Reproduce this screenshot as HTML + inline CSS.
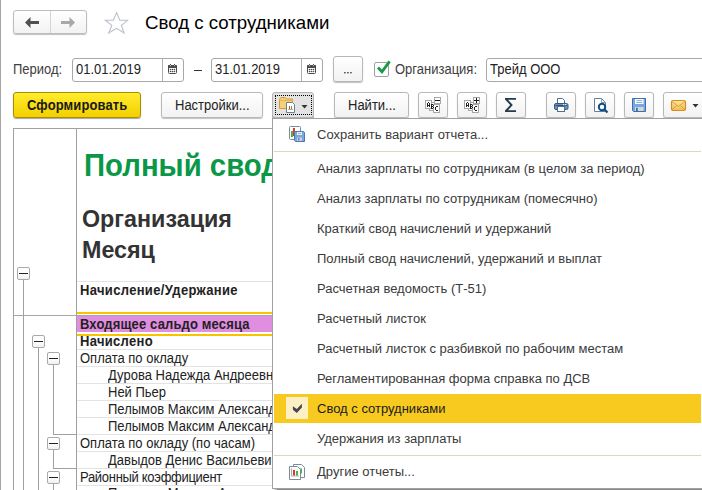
<!DOCTYPE html>
<html><head><meta charset="utf-8">
<style>
*{box-sizing:border-box}
html,body{margin:0;padding:0;width:702px;height:490px;overflow:hidden;background:#fff;position:relative;font-family:"Liberation Sans",sans-serif;color:#333}
.a{position:absolute}
.t{position:absolute;white-space:nowrap;line-height:1;font-size:13px;color:#222;transform:scaleY(1.06);transform-origin:0 11px}
.btn{position:absolute;height:26px;border:1px solid #b8b8b8;border-radius:3px;background:linear-gradient(#fff,#f2f2f2);box-shadow:0 1px 1px rgba(0,0,0,.25)}
.inp{position:absolute;height:24px;border:1px solid #a8a8a8;border-radius:3px;background:#fff}
.hl{position:absolute;height:1px;background:#e3e3e3}
.vl{position:absolute;width:1px;background:#a0a0a0}
.box{position:absolute;width:13px;height:13px;border:1px solid #a9a9a9;border-radius:2px;background:linear-gradient(#fff 50%,#f0f0f0)}
.box:after{content:"";position:absolute;left:1px;top:5px;width:9px;height:1px;background:#222}
.mi{position:absolute;left:317px;white-space:nowrap;line-height:1;font-size:13px;color:#3a3a3a;transform:scaleY(1.04);transform-origin:0 11px}
</style></head>
<body>
<!-- left window border -->
<div class="a" style="left:0;top:0;width:1px;height:490px;background:#a6a6a6"></div>

<!-- nav buttons -->
<div class="btn" style="left:13px;top:10px;width:74px;height:24px;border-color:#bdbdbd"></div>
<div class="a" style="left:50px;top:11px;width:1px;height:22px;background:#d4d4d4"></div>
<svg class="a" style="left:25px;top:17px" width="15" height="11" viewBox="0 0 15 11"><path d="M0 5.5 L5.5 0 L5.5 4 L14 4 L14 7 L5.5 7 L5.5 11 Z" fill="#505050"/></svg>
<svg class="a" style="left:60px;top:17px" width="15" height="11" viewBox="0 0 15 11"><path d="M15 5.5 L9.5 0 L9.5 4 L1 4 L1 7 L9.5 7 L9.5 11 Z" fill="#a8a8a8"/></svg>
<!-- star -->
<svg class="a" style="left:104px;top:11px" width="25" height="24" viewBox="0 0 25 24"><path d="M12.6 1.6 L15.8 9.3 L23.6 9.3 L17.4 14.4 L20 22 L12.6 17.3 L4.8 22 L7.8 14.4 L1.2 9.3 L9.3 9.3 Z" fill="none" stroke="#b9c0c8" stroke-width="1.1" stroke-linejoin="miter"/></svg>
<div class="t" style="left:145px;top:14px;font-size:18.67px;color:#000;transform:none">Свод с сотрудниками</div>

<!-- row 2 -->
<div class="t" style="left:13px;top:63px;color:#404040">Период:</div>
<div class="inp" style="left:72px;top:58px;width:112px"></div>
<div class="a" style="left:162px;top:59px;width:1px;height:22px;background:#b0b0b0"></div>
<svg class="a" style="left:164px;top:60px" width="18" height="18" viewBox="0 0 18 18"><rect x="4.5" y="5.5" width="8" height="8" rx="1" fill="#fff" stroke="#4a4a4a"/><rect x="4" y="5" width="9" height="3" rx="0.8" fill="#4a4a4a"/><rect x="6" y="4" width="1" height="1.2" fill="#4a4a4a"/><rect x="10" y="4" width="1" height="1.2" fill="#4a4a4a"/><rect x="6" y="5.2" width="1" height="1" fill="#d8d8d8"/><rect x="10" y="5.2" width="1" height="1" fill="#d8d8d8"/><g fill="#4a4a4a"><circle cx="6.5" cy="9.5" r="0.8"/><circle cx="8.5" cy="9.5" r="0.8"/><circle cx="10.5" cy="9.5" r="0.8"/><circle cx="6.5" cy="11.5" r="0.8"/><circle cx="8.5" cy="11.5" r="0.8"/><circle cx="10.5" cy="11.5" r="0.8"/></g></svg>
<div class="t" style="left:76px;top:63px">01.01.2019</div>
<div class="a" style="left:194px;top:70px;width:8px;height:1px;background:#333"></div>
<div class="inp" style="left:211px;top:58px;width:112px"></div>
<div class="a" style="left:301px;top:59px;width:1px;height:22px;background:#b0b0b0"></div>
<svg class="a" style="left:303px;top:60px" width="18" height="18" viewBox="0 0 18 18"><rect x="4.5" y="5.5" width="8" height="8" rx="1" fill="#fff" stroke="#4a4a4a"/><rect x="4" y="5" width="9" height="3" rx="0.8" fill="#4a4a4a"/><rect x="6" y="4" width="1" height="1.2" fill="#4a4a4a"/><rect x="10" y="4" width="1" height="1.2" fill="#4a4a4a"/><rect x="6" y="5.2" width="1" height="1" fill="#d8d8d8"/><rect x="10" y="5.2" width="1" height="1" fill="#d8d8d8"/><g fill="#4a4a4a"><circle cx="6.5" cy="9.5" r="0.8"/><circle cx="8.5" cy="9.5" r="0.8"/><circle cx="10.5" cy="9.5" r="0.8"/><circle cx="6.5" cy="11.5" r="0.8"/><circle cx="8.5" cy="11.5" r="0.8"/><circle cx="10.5" cy="11.5" r="0.8"/></g></svg>
<div class="t" style="left:215px;top:63px">31.01.2019</div>
<div class="btn" style="left:333px;top:56px;width:30px;height:26px"></div>
<svg class="a" style="left:344px;top:72px" width="8" height="2" viewBox="0 0 8 2"><rect x="0.2" y="0" width="1.4" height="1.4" fill="#333"/><rect x="3.2" y="0" width="1.4" height="1.4" fill="#333"/><rect x="6.2" y="0" width="1.4" height="1.4" fill="#333"/></svg>
<div class="a" style="left:374px;top:62px;width:15px;height:15px;border:1px solid #a0a0a0;border-radius:2px;background:#fff"></div>
<svg class="a" style="left:376px;top:59px" width="16" height="16" viewBox="0 0 16 16"><path d="M2 8.5 L6 12.8 L13.6 2.4" fill="none" stroke="#179a48" stroke-width="2.8"/></svg>
<div class="t" style="left:395px;top:63px;color:#404040">Организация:</div>
<div class="inp" style="left:486px;top:58px;width:230px"></div>
<div class="t" style="left:490px;top:63px">Трейд ООО</div>

<!-- row 3 toolbar -->
<div class="btn" style="left:13px;top:92px;width:128px;border-color:#a88d00;background:linear-gradient(#ffec2e,#f3d000);box-shadow:0 1px 1px rgba(0,0,0,.35)"></div>
<div class="t" style="left:27px;top:98.5px;font-weight:bold;color:#1a1a1a;letter-spacing:0.12px">Сформировать</div>
<div class="btn" style="left:161px;top:92px;width:102px"></div>
<div class="t" style="left:175px;top:99px">Настройки...</div>
<div class="btn" style="left:272px;top:92px;width:42px;height:26px;background:#e3e3e3;box-shadow:0 1px 0 #a0a0a0;border-color:#b4b4b4"></div>
<div class="a" style="left:275px;top:95px;width:37px;height:20px;border:1px dotted #000"></div>
<svg class="a" style="left:276px;top:94px" width="24" height="24" viewBox="0 0 24 24">
<path d="M3.5 5.5 Q4 3.5 6 3.5 L8 3.5 Q10 3.5 10.5 5 L16.5 5 L16.5 14.5 L3.5 14.5 Z" fill="#f3d07a" stroke="#d99a2e" stroke-width="1"/>
<path d="M3.5 6.5 L16.5 6.5" stroke="#e8b650" stroke-width="1"/>
<path d="M10.5 8.5 L16.5 8.5 L18.5 10.5 L18.5 18.5 L10.5 18.5 Z" fill="#fff" stroke="#6f7f8c" stroke-width="1"/>
<rect x="13" y="12" width="1" height="3" fill="#e43a2a"/><rect x="15" y="12" width="1" height="3" fill="#3eb23e"/><rect x="12" y="15" width="5" height="0.8" fill="#999"/>
</svg>
<svg class="a" style="left:301px;top:105px" width="7" height="4" viewBox="0 0 7 4"><path d="M0.5 0 L6.5 0 L3.5 3.5 Z" fill="#333"/></svg>
<div class="btn" style="left:334px;top:92px;width:75px"></div>
<div class="t" style="left:348px;top:99px">Найти...</div>
<div class="btn" style="left:418px;top:92px;width:30px"></div>
<svg class="a" style="left:421px;top:93px" width="24" height="24" viewBox="0 0 24 24" shape-rendering="crispEdges">
<rect x="8.5" y="9.5" width="5" height="8" fill="#fff" stroke="#a6a6a6"/>
<rect x="4.5" y="7.5" width="6" height="8" fill="#fff" stroke="#a6a6a6"/>
<rect x="12.5" y="11.5" width="6" height="8" fill="#fff" stroke="#a6a6a6"/>
<rect x="13.5" y="4.5" width="6" height="6" fill="#fff" stroke="#a6a6a6"/>
<g fill="#1e1e1e"><rect x="7" y="9" width="1" height="1"/><rect x="6" y="10" width="1" height="4"/><rect x="8" y="10" width="1" height="4"/><rect x="7" y="12" width="1" height="1"/>
<rect x="10" y="11" width="1" height="5"/><rect x="11" y="11" width="1" height="1"/><rect x="12" y="12" width="1" height="1"/><rect x="11" y="13" width="1" height="1"/><rect x="12" y="14" width="1" height="1"/><rect x="11" y="15" width="1" height="1"/>
<rect x="15" y="13" width="2" height="1"/><rect x="14" y="14" width="1" height="3"/><rect x="15" y="17" width="2" height="1"/></g>
<rect x="14" y="7" width="5" height="1.3" fill="#1a1a1a"/>
</svg>
<div class="btn" style="left:457px;top:92px;width:30px"></div>
<svg class="a" style="left:460px;top:93px" width="24" height="24" viewBox="0 0 24 24" shape-rendering="crispEdges">
<rect x="8.5" y="9.5" width="5" height="8" fill="#fff" stroke="#a6a6a6"/>
<rect x="4.5" y="7.5" width="6" height="8" fill="#fff" stroke="#a6a6a6"/>
<rect x="12.5" y="11.5" width="6" height="8" fill="#fff" stroke="#a6a6a6"/>
<rect x="13.5" y="4.5" width="6" height="6" fill="#fff" stroke="#a6a6a6"/>
<g fill="#1e1e1e"><rect x="7" y="9" width="1" height="1"/><rect x="6" y="10" width="1" height="4"/><rect x="8" y="10" width="1" height="4"/><rect x="7" y="12" width="1" height="1"/>
<rect x="10" y="11" width="1" height="5"/><rect x="11" y="11" width="1" height="1"/><rect x="12" y="12" width="1" height="1"/><rect x="11" y="13" width="1" height="1"/><rect x="12" y="14" width="1" height="1"/><rect x="11" y="15" width="1" height="1"/>
<rect x="15" y="13" width="2" height="1"/><rect x="14" y="14" width="1" height="3"/><rect x="15" y="17" width="2" height="1"/></g>
<rect x="14" y="7" width="5" height="1" fill="#1a1a1a"/><rect x="16" y="5" width="1" height="5" fill="#1a1a1a"/>
</svg>
<div class="btn" style="left:496px;top:92px;width:30px"></div>
<svg class="a" style="left:499px;top:93px" width="24" height="24" viewBox="0 0 24 24"><path d="M6 5 L17 5 L17 6.8 L9 6.8 L13.8 12 L9 17.2 L17 17.2 L17 19 L6 19 L6 17.4 L11.2 12 L6 6.6 Z" fill="#243a4e"/></svg>
<div class="btn" style="left:546px;top:92px;width:30px"></div>
<svg class="a" style="left:548px;top:93px" width="24" height="24" viewBox="0 0 24 24">
<path d="M9.5 5.5 L14.5 5.5 L16.5 7.5 L16.5 11 L9.5 11 Z" fill="#fff" stroke="#4a6f96"/>
<rect x="6.5" y="10.5" width="13.5" height="6" rx="1.5" fill="#6a92be" stroke="#34597f"/>
<rect x="7.5" y="12" width="11.5" height="1" fill="#2f4f73"/>
<rect x="15" y="11.2" width="1.2" height="1" fill="#fff"/><rect x="17" y="11.2" width="1.2" height="1" fill="#fff"/>
<rect x="9.5" y="13.5" width="7" height="5" fill="#fff" stroke="#4a6f96"/>
</svg>
<div class="btn" style="left:585px;top:92px;width:30px"></div>
<svg class="a" style="left:588px;top:93px" width="24" height="24" viewBox="0 0 24 24">
<path d="M6.5 5.5 L13.5 5.5 L17.5 9.5 L17.5 18.5 L6.5 18.5 Z" fill="#fff" stroke="#6a7f96"/>
<path d="M13.5 5.5 L13.5 9.5 L17.5 9.5" fill="none" stroke="#8aa0b5"/>
<circle cx="14" cy="14" r="3.2" fill="#fff" stroke="#0d4f86" stroke-width="2"/>
<path d="M16 16 L19.5 19.5" stroke="#0d4f86" stroke-width="2.2"/>
</svg>
<div class="btn" style="left:624px;top:92px;width:30px"></div>
<svg class="a" style="left:627px;top:93px" width="24" height="24" viewBox="0 0 24 24">
<path d="M5.5 5.5 L18.5 5.5 L18.5 18.5 L6.5 18.5 L5.5 17.5 Z" fill="#7ba7dc" stroke="#3e6eae"/>
<rect x="8" y="6" width="8.5" height="5" fill="#fff"/>
<rect x="9.3" y="7.2" width="6" height="0.9" fill="#7ba7dc"/><rect x="9.3" y="9.1" width="6" height="0.9" fill="#7ba7dc"/>
<rect x="8" y="14" width="8.5" height="4" fill="#d3d9d6"/>
<rect x="9" y="14.8" width="1.8" height="3.2" fill="#3e6eae"/>
</svg>
<div class="btn" style="left:663px;top:92px;width:60px"></div>
<svg class="a" style="left:670px;top:99px" width="17" height="13" viewBox="0 0 17 13">
<defs><linearGradient id="env" x1="0" y1="0" x2="0" y2="1"><stop offset="0" stop-color="#fde49c"/><stop offset="1" stop-color="#f0bd55"/></linearGradient></defs>
<rect x="1.5" y="1.5" width="14" height="10" rx="1.8" fill="url(#env)" stroke="#d48d22" stroke-width="1.2"/>
<path d="M2 2.5 L8.5 7.5 L15 2.5 M2 11 L6.5 6.5 M15 11 L10.5 6.5" fill="none" stroke="#d99a35" stroke-width="0.9"/>
</svg>
<svg class="a" style="left:692px;top:104px" width="7" height="4" viewBox="0 0 7 4"><path d="M0.5 0 L6.5 0 L3.5 3.5 Z" fill="#333"/></svg>

<!-- report -->
<div class="a" style="left:13px;top:128px;width:260px;height:1px;background:#a0a0a0"></div>
<div class="vl" style="left:13px;top:128px;height:362px"></div>
<div class="vl" style="left:76px;top:128px;height:362px"></div>
<div class="a" style="left:13px;top:315px;width:262px;height:1px;background:#a6a6a6"></div>
<div class="t" style="left:84px;top:151px;font-size:29.33px;font-weight:bold;color:#0b9846;transform:scaleY(1.085);transform-origin:0 24.8px">Полный свод начислений</div>
<div class="t" style="left:82px;top:207.5px;font-size:23.3px;font-weight:bold;color:#333;transform:none">Организация</div>
<div class="t" style="left:82px;top:238.5px;font-size:23.3px;font-weight:bold;color:#333;transform:none">Месяц</div>
<div class="hl" style="left:77px;top:281px;width:200px"></div>
<div class="t" style="left:80px;top:283.5px;font-weight:bold;letter-spacing:0.33px">Начисление/Удержание</div>
<div class="a" style="left:77px;top:312px;width:200px;height:2px;background:#f8c300"></div>
<div class="a" style="left:77px;top:316px;width:200px;height:16px;background:#e08ee0"></div>
<div class="t" style="left:80px;top:318px;font-weight:bold;letter-spacing:0.15px">Входящее сальдо месяца</div>
<div class="a" style="left:77px;top:334px;width:200px;height:2px;background:#f8c300"></div>
<div class="t" style="left:80px;top:335px;font-weight:bold;letter-spacing:0.3px">Начислено</div>
<div class="hl" style="left:77px;top:349px;width:200px"></div>
<div class="t" style="left:80px;top:352px">Оплата по окладу</div>
<div class="hl" style="left:77px;top:366px;width:200px"></div>
<div class="t" style="left:108px;top:369px">Дурова Надежда Андреевна</div>
<div class="hl" style="left:77px;top:383px;width:200px"></div>
<div class="t" style="left:108px;top:386px">Ней Пьер</div>
<div class="hl" style="left:77px;top:400px;width:200px"></div>
<div class="t" style="left:108px;top:403px">Пелымов Максим Александрович</div>
<div class="hl" style="left:77px;top:417px;width:200px"></div>
<div class="t" style="left:108px;top:420px">Пелымов Максим Александрович</div>
<div class="hl" style="left:77px;top:434px;width:200px"></div>
<div class="t" style="left:80px;top:437px">Оплата по окладу (по часам)</div>
<div class="hl" style="left:77px;top:451px;width:200px"></div>
<div class="t" style="left:108px;top:454px">Давыдов Денис Васильевич</div>
<div class="hl" style="left:77px;top:468px;width:200px"></div>
<div class="t" style="left:80px;top:471px;letter-spacing:-0.3px">Районный коэффициент</div>
<div class="hl" style="left:77px;top:485px;width:200px"></div>
<div class="t" style="left:108px;top:487px">Пелымов Максим Александрович</div>

<!-- tree -->
<div class="vl" style="left:23px;top:279px;height:211px"></div>
<div class="box" style="left:17px;top:267px"></div>
<div class="vl" style="left:38px;top:347px;height:143px"></div>
<div class="box" style="left:32px;top:335px"></div>
<div class="vl" style="left:53px;top:364px;height:70px"></div>
<div class="a" style="left:53px;top:434px;width:23px;height:1px;background:#a0a0a0"></div>
<div class="box" style="left:47px;top:352px"></div>
<div class="vl" style="left:53px;top:449px;height:19px"></div>
<div class="a" style="left:53px;top:468px;width:23px;height:1px;background:#a0a0a0"></div>
<div class="box" style="left:47px;top:437px"></div>
<div class="vl" style="left:53px;top:483px;height:7px"></div>
<div class="box" style="left:47px;top:471px"></div>

<!-- dropdown menu -->
<div class="a" style="left:272px;top:118px;width:432px;height:371px;background:#fff;border:1px solid #a0a0a0;box-shadow:3px 2px 2px rgba(0,0,0,.35)"></div>
<div class="a" style="left:277px;top:489px;width:430px;height:1px;background:#8a8a8a"></div>
<div class="a" style="left:274px;top:151px;width:427px;height:1px;background:#ddd6c4"></div>
<div class="a" style="left:274px;top:394px;width:427px;height:29px;background:#f8ca20"></div>
<div class="a" style="left:286px;top:397px;width:22px;height:22px;background:#fdf0c4"></div>
<svg class="a" style="left:292px;top:403px" width="11" height="10" viewBox="0 0 11 10"><path d="M0.9 3.2 L4.8 6 L9.9 0.7 L9.9 4.5 L4.8 9.9 L0.9 6.7 Z" fill="#45474f"/></svg>
<div class="a" style="left:274px;top:455px;width:427px;height:1px;background:#ddd6c4"></div>
<svg class="a" style="left:286px;top:122px" width="24" height="24" viewBox="0 0 24 24">
<rect x="3.5" y="4.5" width="11" height="13" rx="1" fill="#fff" stroke="#7d8b98"/>
<rect x="7" y="6" width="2" height="8" fill="#e8322a"/><rect x="5" y="9" width="2" height="6" fill="#45b545"/>
<path d="M8.5 9.5 L17.5 9.5 L18.5 10.5 L18.5 19.5 L9.5 19.5 L8.5 18.5 Z" fill="#7aa6dc" stroke="#4a78b5"/>
<rect x="11" y="10" width="5" height="3" fill="#e9f0f8"/><rect x="12" y="11" width="3" height="0.8" fill="#7aa6dc"/>
<rect x="11" y="15.5" width="5" height="3.5" fill="#c8d2d8"/><rect x="12" y="16" width="1.5" height="2.5" fill="#6a8ab0"/>
</svg>
<svg class="a" style="left:286px;top:459px" width="24" height="24" viewBox="0 0 24 24">
<path d="M7.5 5.5 L15.5 5.5 L18.5 8.5 L18.5 18.5 L7.5 18.5 Z" fill="#fff" stroke="#7d8b98"/>
<rect x="14" y="9.5" width="2" height="5" fill="#45b545"/>
<path d="M3.5 7.5 L11.5 7.5 L14.5 10.5 L14.5 20.5 L3.5 20.5 Z" fill="#fff" stroke="#7d8b98"/>
<path d="M5.5 9.5 L5.5 17 L13 17" fill="none" stroke="#999" stroke-width="0.8"/>
<rect x="7" y="11" width="2" height="5.5" fill="#e8322a"/><rect x="10" y="12" width="2" height="4.5" fill="#45b545"/>
</svg>
<div class="mi" style="top:128px">Сохранить вариант отчета...</div>
<div class="mi" style="top:162px">Анализ зарплаты по сотрудникам (в целом за период)</div>
<div class="mi" style="top:192px">Анализ зарплаты по сотрудникам (помесячно)</div>
<div class="mi" style="top:222px">Краткий свод начислений и удержаний</div>
<div class="mi" style="top:252px">Полный свод начислений, удержаний и выплат</div>
<div class="mi" style="top:282px">Расчетная ведомость (Т-51)</div>
<div class="mi" style="top:312px">Расчетный листок</div>
<div class="mi" style="top:342px">Расчетный листок с разбивкой по рабочим местам</div>
<div class="mi" style="top:372px">Регламентированная форма справка по ДСВ</div>
<div class="mi" style="top:402px;color:#1a1a1a">Свод с сотрудниками</div>
<div class="mi" style="top:432px">Удержания из зарплаты</div>
<div class="mi" style="top:465px">Другие отчеты...</div>
</body></html>
